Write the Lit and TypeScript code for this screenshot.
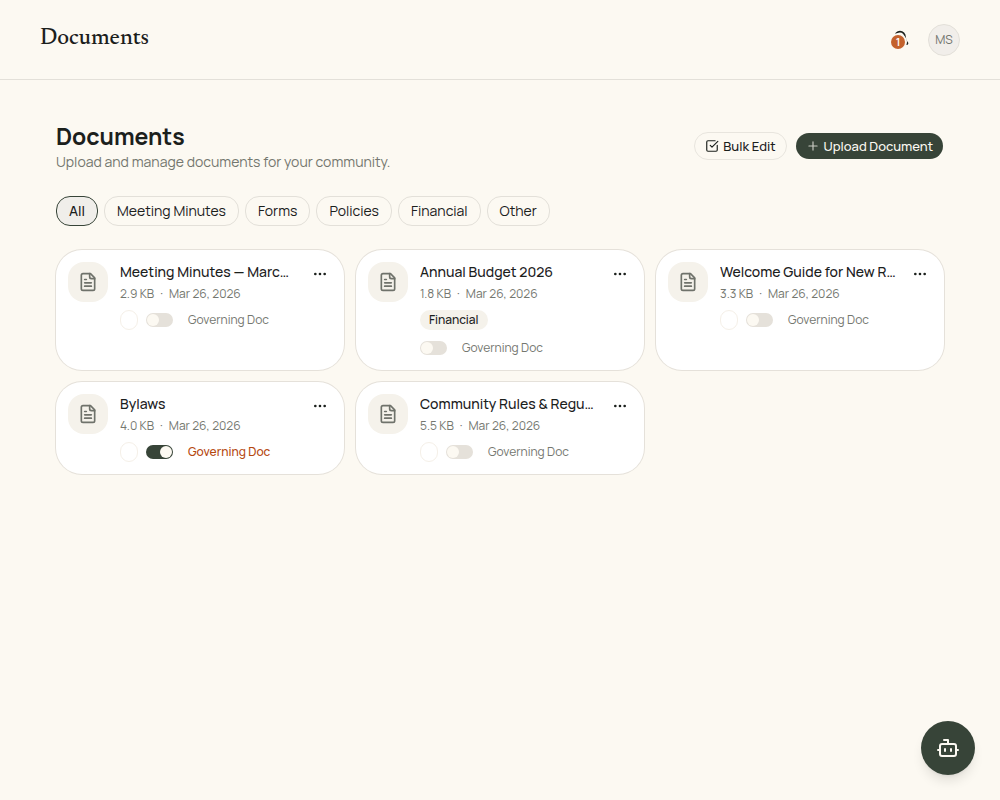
import { LitElement, html, css, svg, nothing } from "lit";
import { customElement, property, state } from "lit/decorators.js";

interface Doc {
  title: string;
  size: string;
  date: string;
  category: string;
  governing: boolean;
}

const DOCS: Doc[] = [
  { title: "Meeting Minutes — March 2026", size: "2.9 KB", date: "Mar 26, 2026", category: "", governing: false },
  { title: "Annual Budget 2026", size: "1.8 KB", date: "Mar 26, 2026", category: "Financial", governing: false },
  { title: "Welcome Guide for New Residents", size: "3.3 KB", date: "Mar 26, 2026", category: "", governing: false },
  { title: "Bylaws", size: "4.0 KB", date: "Mar 26, 2026", category: "", governing: true },
  { title: "Community Rules & Regulations", size: "5.5 KB", date: "Mar 26, 2026", category: "", governing: false },
];

const FILTERS = ["All", "Meeting Minutes", "Forms", "Policies", "Financial", "Other"];

const ICONS = {
  bell: svg`<path d="M10.268 21a2 2 0 0 0 3.464 0"/><path d="M3.262 15.326A1 1 0 0 0 4 17h16a1 1 0 0 0 .74-1.673C19.41 13.956 18 12.499 18 8A6 6 0 0 0 6 8c0 4.499-1.411 5.956-2.738 7.326"/>`,
  check: svg`<path d="M21 10.656V19a2 2 0 0 1-2 2H5a2 2 0 0 1-2-2V5a2 2 0 0 1 2-2h12.344"/><path d="m9 11 3 3L22 4"/>`,
  plus: svg`<path d="M5 12h14"/><path d="M12 5v14"/>`,
  file: svg`<path d="M15 2H6a2 2 0 0 0-2 2v16a2 2 0 0 0 2 2h12a2 2 0 0 0 2-2V7Z"/><path d="M14 2v4a2 2 0 0 0 2 2h4"/><path d="M10 9H8"/><path d="M16 13H8"/><path d="M16 17H8"/>`,
  more: svg`<circle cx="12" cy="12" r="1"/><circle cx="19" cy="12" r="1"/><circle cx="5" cy="12" r="1"/>`,
  bot: svg`<path d="M12 8V4H8"/><rect width="16" height="12" x="4" y="8" rx="2"/><path d="M2 14h2"/><path d="M20 14h2"/><path d="M15 13v2"/><path d="M9 13v2"/>`,
};

const icon = (name: keyof typeof ICONS, size: number) => html`
  <svg width=${size} height=${size} viewBox="0 0 24 24" fill="none" stroke="currentColor"
    stroke-width="2" stroke-linecap="round" stroke-linejoin="round" aria-hidden="true">${ICONS[name]}</svg>`;

const shared = css`
  * { box-sizing: border-box; }
  h1, h2, h3, p { margin: 0; }
  svg { display: block; flex: none; }
  button { font: inherit; color: inherit; cursor: pointer; }
`;

@customElement("document-card")
export class DocumentCard extends LitElement {
  @property({ attribute: false }) doc!: Doc;

  static styles = [shared, css`
    :host {
      display: flex;
      align-items: flex-start;
      gap: 12px;
      min-width: 0;
      padding: 12px;
      background: #fff;
      border-radius: 26px;
      box-shadow: 0 0 0 1px #e5e1da;
    }
    .tile {
      display: grid;
      place-items: center;
      flex: none;
      width: 40px;
      height: 40px;
      border-radius: 16px;
      background: #f5f2eb;
      color: #6f726b;
    }
    .body { flex: 1; min-width: 0; }
    .title {
      font-size: 14px;
      line-height: 20px;
      font-weight: 500;
      overflow: hidden;
      white-space: nowrap;
      text-overflow: ellipsis;
    }
    .meta {
      display: flex;
      gap: 6px;
      margin-top: 4px;
      font-size: 12px;
      line-height: 16px;
      color: #74776f;
    }
    .tags {
      display: flex;
      flex-wrap: wrap;
      align-items: center;
      gap: 8px;
      margin-top: 8px;
      font-size: 12px;
      line-height: 20px;
    }
    .badge {
      height: 20px;
      padding: 0 9px;
      border-radius: 10px;
      background: #f5f2eb;
      font-weight: 500;
    }
    .badge.empty {
      padding: 0 8px;
      border: 1px solid #f5f0e8;
      background: none;
    }
    .governing { display: flex; align-items: center; gap: 15px; color: #74776f; }
    .full { flex-basis: 100%; }
    .governing.on { color: #b5480f; font-weight: 500; }
    .switch {
      appearance: none;
      display: flex;
      align-items: center;
      width: 27px;
      height: 14px;
      margin: 0;
      padding: 0 1px;
      border-radius: 7px;
      background: #e5e1da;
      cursor: pointer;
    }
    .switch::before {
      content: "";
      width: 12px;
      height: 12px;
      border-radius: 6px;
      background: #fcf9f2;
    }
    .switch:checked { background: #374438; justify-content: flex-end; }
    .more {
      display: grid;
      place-items: center;
      flex: none;
      width: 24px;
      height: 24px;
      padding: 0;
      border: 0;
      border-radius: 8px;
      background: none;
    }
  `];

  private toggle(e: Event) {
    this.doc = { ...this.doc, governing: (e.target as HTMLInputElement).checked };
  }

  render() {
    const d = this.doc;
    return html`
      <div class="tile">${icon("file", 20)}</div>
      <div class="body">
        <h3 class="title">${d.title}</h3>
        <p class="meta"><span>${d.size}</span><span>·</span><span>${d.date}</span></p>
        <div class="tags">
          <span class="badge ${d.category ? "" : "empty"}">${d.category || nothing}</span>
          <label class="governing ${d.category ? "full" : ""} ${d.governing ? "on" : ""}">
            <input class="switch" type="checkbox" role="switch" .checked=${d.governing} @change=${this.toggle}>
            <span>Governing Doc</span>
          </label>
        </div>
      </div>
      <button class="more" type="button" aria-label="Document actions">${icon("more", 16)}</button>
    `;
  }
}

@customElement("app-root")
export class AppRoot extends LitElement {
  @state() private filter = "All";

  static styles = [shared, css`
    :host {
      display: block;
      min-height: 100vh;
      background: #fcf9f2;
      color: #1b201c;
      font-family: Manrope, Inter, "Open Sans", sans-serif;
      font-size: 14px;
      line-height: 20px;
    }
    .topbar {
      display: flex;
      justify-content: space-between;
      align-items: center;
      height: 80px;
      padding: 0 40px;
      border-bottom: 1px solid #e3e0d9;
    }
    .brand {
      padding-bottom: 2px;
      font: 500 23px/32px Newsreader, "Liberation Serif", serif;
    }
    .tools { display: flex; align-items: center; gap: 18px; }
    .bell {
      position: relative;
      padding: 0;
      border: 0;
      background: none;
    }
    .count {
      position: absolute;
      left: 1px;
      top: 5px;
      width: 14px;
      height: 14px;
      border-radius: 7px;
      background: #c4622d;
      box-shadow: 0 0 0 2px #fcf9f2;
      color: #fff;
      font-size: 11px;
      line-height: 14px;
      font-weight: 600;
      text-align: center;
    }
    .avatar {
      width: 32px;
      height: 32px;
      padding: 0;
      border: 1px solid #e3e0d9;
      border-radius: 16px;
      background: #f1eeea;
      color: #72756e;
      font-size: 12px;
      line-height: 16px;
    }
    .main { padding: 40px 56px; }
    .heading {
      display: flex;
      flex-wrap: wrap;
      justify-content: space-between;
      align-items: center;
      gap: 16px;
    }
    .heading h2 { font-size: 23px; line-height: 32px; font-weight: 700; }
    .sub { color: #74776f; }
    .actions { display: flex; gap: 8px; }
    .btn {
      display: flex;
      align-items: center;
      gap: 4px;
      height: 28px;
      padding: 0 10px;
      border: 1px solid #e8e5de;
      border-radius: 14px;
      background: none;
      font-size: 13px;
      line-height: 18px;
      font-weight: 500;
    }
    .btn.primary {
      border-color: transparent;
      background: #374438;
      background-clip: padding-box;
      color: #fcf9f2;
    }
    .btn.primary svg { opacity: 0.75; }
    .filters { display: flex; flex-wrap: wrap; gap: 6px; margin-top: 24px; }
    .chip {
      height: 30px;
      padding: 0 12px;
      border: 1px solid #e3e0d9;
      border-radius: 14px;
      background: none;
    }
    .chip[aria-pressed="true"] {
      border-color: #374438;
      background: #f0eeea;
      font-weight: 500;
    }
    .grid {
      display: grid;
      grid-template-columns: repeat(auto-fill, minmax(260px, 1fr));
      gap: 12px;
      margin-top: 24px;
    }
    .assistant {
      position: fixed;
      right: 25px;
      bottom: 25px;
      display: grid;
      place-items: center;
      width: 54px;
      height: 54px;
      padding: 0;
      border: 0;
      border-radius: 27px;
      background: #374438;
      color: #fcf9f2;
      box-shadow: 0 8px 12px -2px rgb(0 0 0 / 0.1), 0 3px 5px -3px rgb(0 0 0 / 0.1);
    }
  `];

  render() {
    const docs = DOCS.filter((d) => this.filter === "All" || d.category === this.filter);
    return html`
      <header class="topbar">
        <h1 class="brand">Documents</h1>
        <div class="tools">
          <button class="bell" type="button" aria-label="Notifications">${icon("bell", 20)}<span class="count">1</span></button>
          <button class="avatar" type="button" aria-label="Account MS">MS</button>
        </div>
      </header>
      <main class="main">
        <div class="heading">
          <div>
            <h2>Documents</h2>
            <p class="sub">Upload and manage documents for your community.</p>
          </div>
          <div class="actions">
            <button class="btn" type="button">${icon("check", 14)}Bulk Edit</button>
            <button class="btn primary" type="button">${icon("plus", 14)}Upload Document</button>
          </div>
        </div>
        <div class="filters">
          ${FILTERS.map((f) => html`
            <button class="chip" type="button" aria-pressed=${f === this.filter ? "true" : "false"}
              @click=${() => (this.filter = f)}>${f}</button>`)}
        </div>
        <div class="grid">
          ${docs.map((d) => html`<document-card .doc=${d}></document-card>`)}
        </div>
      </main>
      <button class="assistant" type="button" aria-label="Open assistant">${icon("bot", 24)}</button>
    `;
  }
}
